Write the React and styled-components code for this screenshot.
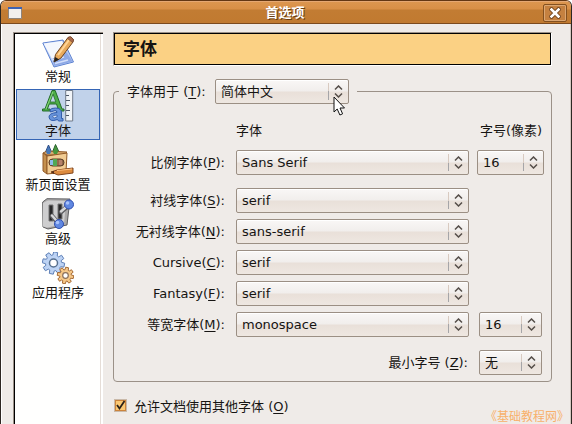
import React from "react";
import styled, { createGlobalStyle } from "styled-components";

const GlobalStyle = createGlobalStyle`
  * { box-sizing: border-box; }
  body {
    margin: 0;
    overflow: hidden;
    font-family: "DejaVu Sans", "Noto Sans CJK SC", sans-serif;
    font-size: 13px;
    color: #161412;
  }
`;

const Window = styled.div`
  width: 572px;
  height: 424px;
  display: flex;
  flex-direction: column;
  overflow: hidden;
  background: #efebe8;
  border: solid #2d2722;
  border-width: 1px 1px 0;
  border-color: #633713 #2d2722 #2d2722;
  border-radius: 6px 6px 0 0;
  box-shadow: inset 1px 0 #fff, inset -1px 0 #d4c8c0;
`;

const TitleBar = styled.header`
  flex: none;
  height: 23px;
  display: grid;
  grid-template-columns: 31px 1fr 33px;
  align-items: center;
  border-top: 1px solid #e5a873;
  border-bottom: 1px solid #7c4a1d;
  background: linear-gradient(#dc964f 0, #d88f46 7px, #c27c33 8px, #c17a30 100%);
`;

const WindowGlyph = styled.svg`
  display: block;
  margin: 1px 0 0 7px;
`;

const Title = styled.h1`
  margin: 0;
  text-align: center;
  font-size: 13px;
  line-height: 20px;
  font-weight: bold;
  color: #fff;
  text-shadow: 1px 1px #6a3d12;
`;

const CloseButton = styled.button`
  width: 24px;
  height: 18px;
  margin: 1px 0 0 5px;
  padding: 0;
  display: flex;
  align-items: center;
  justify-content: center;
  border: 1px solid #83501f;
  border-radius: 2px;
  background: #c58140;
  box-shadow: inset 0 0 0 1px #dba672;
`;

const Body = styled.div`
  flex: 1;
  display: flex;
  padding: 8px 19px 0 12px;
`;

const Sidebar = styled.nav`
  flex: none;
  width: 89px;
  height: 400px;
  margin: 1px 0 0 1px;
  padding: 1px;
  display: flex;
  flex-direction: column;
  gap: 3px;
  background: #fffffe;
  border: solid #000;
  border-width: 1px 0 0 1px;
  box-shadow: inset -2px 0 #fff, inset -3px 0 #e5ddd7;
  outline: 1px solid #9b9188;
  clip-path: inset(-1px 0 0 -1px);
`;

const Category = styled.div`
  width: 84px;
  height: 51px;
  display: flex;
  flex-direction: column;
  align-items: center;
  border: 1px solid ${(p) => (p.$selected ? "#3565b5" : "transparent")};
  background: ${(p) => (p.$selected ? "#c1d2ea" : "transparent")};
  line-height: 17px;

  svg { display: block; flex: none; }
`;

const Content = styled.main`
  width: 439px;
  margin-left: 10px;
`;

const Heading = styled.h2`
  margin: 0;
  height: 34px;
  border: 1px solid;
  border-color: #9b9188 #fff #fff #9b9188;
  box-shadow: inset 0 0 0 1px #000;
  background: #fbd184;
  padding-left: 9px;
  line-height: 33px;
  font-size: 17px;
  font-weight: bold;
`;

const Group = styled.section`
  width: 439px;
  height: 291px;
  margin-top: 25px;
  border: 1px solid #9b9188;
  border-radius: 4px;
`;

const Legend = styled.div`
  width: 238px;
  height: 25px;
  margin: -13px 0 0 5px;
  padding: 0 8px;
  display: flex;
  align-items: center;
  justify-content: space-between;
  background: #efebe8;
`;

const Row = styled.div`
  display: grid;
  grid-template-columns: 111px 233px 1fr;
  column-gap: 11px;
  align-items: center;
  height: 25px;
  margin-top: ${(p) => p.$gap}px;
`;

const Label = styled.label`
  text-align: right;
  white-space: nowrap;
  line-height: 18px;
  u { text-underline-offset: 2px; text-decoration-thickness: 1px; }
`;

const ColumnTitle = styled.span`
  white-space: nowrap;
  line-height: 18px;
  margin-left: ${(p) => p.$indent || 0}px;
`;

const ComboBox = styled.div`
  width: ${(p) => p.$width}px;
  height: 25px;
  margin-left: ${(p) => p.$indent || 0}px;
  display: flex;
  align-items: center;
  border: 1px solid #9b8f84;
  border-radius: 2px;
  padding-left: 5px;
  line-height: 18px;
  background: linear-gradient(#f9f7f6 0, #f1eeec 11px, #e9e0d9 12px, #eee7e1 100%);
  box-shadow: inset 0 1px #fff;
`;

const ComboValue = styled.span`
  flex: 1;
  white-space: nowrap;
`;

const Divider = styled.span`
  width: 1px;
  height: 17px;
  background: linear-gradient(#d8cac0 50%, #a5a5a8 50%);
`;

const Arrows = styled.svg`
  display: block;
  width: 19px;
  height: 13px;
`;

const MinimumRow = styled.div`
  display: flex;
  justify-content: flex-end;
  align-items: center;
  gap: 11px;
  height: 25px;
  margin: 13px 9px 0 0;
`;

const CheckRow = styled.div`
  display: flex;
  align-items: center;
  gap: 7px;
  height: 20px;
  margin: 15px 0 0 1px;
`;

const CheckBox = styled.span`
  width: 13px;
  height: 13px;
  display: flex;
  margin-bottom: 3px;
  background: #fbc873;
  border: 1px solid #c9b9a9;
  box-shadow: inset 0 0 0 1px #cc843c;
`;

const Signature = styled.div`
  position: absolute;
  left: 485px;
  top: 407px;
  white-space: nowrap;
  font: 12px/18px "Noto Sans CJK SC", sans-serif;
  color: #f8b06a;
`;

const Pointer = styled.svg`
  position: absolute;
  left: 333px;
  top: 96px;
`;

function Combo({ value, width, indent }) {
  return (
    <ComboBox $width={width} $indent={indent}>
      <ComboValue>{value}</ComboValue>
      <Divider />
      <Arrows viewBox="0 0 19 13">
        <path d="M6 4.5 9.5 1 13 4.5M6 8.5 9.5 12 13 8.5" fill="none" stroke="#554e49" strokeWidth="1.5" />
      </Arrows>
    </ComboBox>
  );
}

function NoteIcon() {
  return (
    <svg width="32" height="32" viewBox="0 0 32 32">
      <path d="M.8 7 21 4 31.5 26 12 31Z" fill="#b4caf4" stroke="#5f83d0" />
      <path d="M1.6 7.5 20 5 25 16 10 23Z" fill="#f4f7fd" />
      <path d="M10 23 24 15.5 30.6 25.5 12.5 30Z" fill="#8ea9e6" />
      <path d="M10 24 22 21M13 27.5 26 24" stroke="#d4e0fa" strokeWidth="1.5" />
      <path d="M12 26 13.5 18.5 26 1.5Q29-.5 31.5 3.5L31 6 19 22Z" fill="#e9aa5c" stroke="#6e4521" />
      <path d="M16 19 27 4" stroke="#ffd597" strokeWidth="2" />
      <path d="m25.5 2.5 5 4 1-2.5Q29-1 26 1.5Z" fill="#a96a4c" stroke="#71422b" strokeWidth=".6" />
      <path d="m12 26 1.2-5 4 2.4Z" fill="#222" />
    </svg>
  );
}

function FontIcon() {
  return (
    <svg width="32" height="32" viewBox="0 0 32 32">
      <path d="M23.7.5h7v30.5h-7z" fill="#f1f4f8" stroke="#6f7988" />
      <path d="M24 5.5h3M24 10.5h4M24 15.5h3M24 20.5h4M24 25.5h3" stroke="#4d5868" />
      <path d="M.5 21v-2H3L10 .5h3.2L20 19h2v2h-8v-2h2.2l-1.7-5H7.2l-1.8 5h2.8v2Z" fill="#4fae48" stroke="#246c2a" />
      <path d="m8 12 3-8 2.8 8Z" fill="#c1d2ea" stroke="#246c2a" strokeWidth=".8" />
      <path d="M4 19 10.8 2" stroke="#87d77b" />
      <path d="M8 20q1-2 5.5-2 6 0 6 5v5.5h1.5V31h-4.5l-1-1.5q-8 3-8.5-2.5 0-4 8-4.5 0-2-2-2L8.5 22Z" fill="#6794db" stroke="#315caa" />
      <path d="M15 25q-4.5 0-4.5 2 1 2 4.5 0Z" fill="#d4e0f3" stroke="#315caa" strokeWidth=".8" />
    </svg>
  );
}

function CrayonsIcon() {
  return (
    <svg width="32" height="32" viewBox="0 0 32 32">
      <path d="m3.5 8 3-7 3 7v4h-6Z" fill="#4b78cf" stroke="#29487f" />
      <path d="m10.5 8 3-7.5L17 8v4h-6.5Z" fill="#4c9c48" stroke="#275e2a" />
      <path d="m1 9 4-2 20 1-3 3H5Z" fill="#d7ab6f" stroke="#915926" />
      <path d="m1 9 4 3v18l-4-3Z" fill="#c4904e" stroke="#915926" />
      <path d="m5 12 20-3-1 19-19 2Z" fill="#f1cc93" stroke="#915926" />
      <path d="m4 8 2.5-6L9 8l-1 2H5Z" fill="#4778b6" />
      <path d="m11 8 2.5-6L16 8l-1 2h-3Z" fill="#47963e" />
      <rect x="7" y="15" width="15" height="7" rx="3.5" fill="#93694b" stroke="#583c27" />
      <path d="M8 16h3v5H8Z" fill="#8dbbe9" />
      <path d="M11 15h4v7h-4Z" fill="#50a853" />
      <path d="M17 16h3v5h-3Z" fill="#b5816a" />
      <path d="m9 28 6-2 16-2v5l-15 2Z" fill="#dc8b3f" stroke="#81461e" />
      <path d="m15 26.5 15-1.5" stroke="#ffc282" />
      <path d="m9 28 3-1v3Z" fill="#532d18" />
    </svg>
  );
}

function SwitchIcon() {
  return (
    <svg width="32" height="32" viewBox="0 0 32 32">
      <path d="M.7 4 5 .7 28 1l-3 26-19 4-5-2Z" fill="#aaa9a9" stroke="#5e5e60" />
      <path d="m1 5 5-2.5 18 .5-2 23L5 29.5l-4-1Z" fill="#cececf" />
      <path d="M7 7h4v16H7ZM16 6h4v15h-4Z" fill="#29292a" stroke="#777" />
      <path d="m10 18 7 8M19 14l8-7" stroke="#5e5e61" strokeWidth="4.5" strokeLinecap="round" />
      <path d="m10 17.5 7 8M19 13.5l8-7" stroke="#d7d8d9" strokeWidth="2.4" strokeLinecap="round" />
      <circle cx="27" cy="6.5" r="4.5" fill="#6088e1" stroke="#304faf" />
      <circle cx="17" cy="26" r="4.5" fill="#6088e1" stroke="#304faf" />
      <circle cx="25.5" cy="5" r="1.8" fill="#a8c2fc" />
      <circle cx="15.5" cy="24.5" r="1.8" fill="#a8c2fc" />
    </svg>
  );
}

function gearPath(cx, cy, outer, inner) {
  const points = [];
  for (let i = 0; i < 8; i += 1) {
    const center = (i * Math.PI) / 4 + 0.2;
    for (const [offset, radius] of [[-0.29, inner], [-0.18, outer], [0.18, outer], [0.29, inner]]) {
      points.push(`${cx + Math.cos(center + offset) * radius} ${cy + Math.sin(center + offset) * radius}`);
    }
  }
  return `M${points.join("L")}Z`;
}

function GearsIcon() {
  return (
    <svg width="32" height="32" viewBox="0 0 32 32">
      <path d={gearPath(11.5, 11, 11.2, 8)} fill="#bdd3f4" stroke="#5e80b7" />
      <circle cx="11.5" cy="11" r="4" fill="#fff" stroke="#587190" strokeWidth="1.5" />
      <path d={gearPath(23.5, 23.5, 8.3, 5.8)} fill="#f6c888" stroke="#a76b35" />
      <circle cx="23.5" cy="23.5" r="2.8" fill="#fff" stroke="#8b705b" strokeWidth="1.2" />
    </svg>
  );
}

const categories = [
  ["常规", NoteIcon],
  ["字体", FontIcon],
  ["新页面设置", CrayonsIcon],
  ["高级", SwitchIcon],
  ["应用程序", GearsIcon],
];

const fonts = [
  ["比例字体", "P", "Sans Serif", 7, 67, -2],
  ["衬线字体", "S", "serif", 13],
  ["无衬线字体", "N", "sans-serif", 6],
  ["Cursive", "C", "serif", 6],
  ["Fantasy", "F", "serif", 6],
  ["等宽字体", "M", "monospace", 6, 63, 0],
];

export default function App() {
  return (
    <>
      <GlobalStyle />
      <Window>
        <TitleBar>
          <WindowGlyph width="14" height="12" viewBox="0 0 14 12">
            <path d="M.5.5h13v11H.5z" fill="#f2efed" stroke="#8f847b" />
            <path d="M0 1h14" stroke="#3e62b2" strokeWidth="2" />
          </WindowGlyph>
          <Title>首选项</Title>
          <CloseButton aria-label="关闭">
            <svg width="12" height="12" viewBox="0 0 12 12">
              <path d="m2.5 2.5 7 7m0-7-7 7" stroke="#70421b" strokeWidth="4.4" strokeLinecap="square" />
              <path d="m2.5 2.5 7 7m0-7-7 7" stroke="#fff" strokeWidth="2.6" strokeLinecap="square" />
            </svg>
          </CloseButton>
        </TitleBar>
        <Body>
          <Sidebar>
            {categories.map(([name, Icon]) => (
              <Category key={name} $selected={name === "字体"}>
                <Icon />
                {name}
              </Category>
            ))}
          </Sidebar>
          <Content>
            <Heading>字体</Heading>
            <Group>
              <Legend>
                <Label>字体用于 (<u>T</u>):</Label>
                <Combo value="简体中文" width={134} />
              </Legend>
              <Row $gap={14}>
                <span />
                <ColumnTitle>字体</ColumnTitle>
                <ColumnTitle>字号(像素)</ColumnTitle>
              </Row>
              {fonts.map(([name, key, value, gap, sizeWidth, indent]) => (
                <Row key={name} $gap={gap}>
                  <Label>{name}(<u>{key}</u>):</Label>
                  <Combo value={value} width={233} />
                  {sizeWidth && <Combo value="16" width={sizeWidth} indent={indent - 1} />}
                </Row>
              ))}
              <MinimumRow>
                <Label>最小字号 (<u>Z</u>):</Label>
                <Combo value="无" width={63} />
              </MinimumRow>
            </Group>
            <CheckRow>
              <CheckBox>
                <svg width="11" height="11" viewBox="0 0 11 11">
                  <path d="m2 5 2.5 3.5L9.5 1" fill="none" stroke="#2b2119" strokeWidth="1.8" />
                </svg>
              </CheckBox>
              <Label>允许文档使用其他字体 (<u>O</u>)</Label>
            </CheckRow>
          </Content>
        </Body>
      </Window>
      <Pointer width="13" height="20" viewBox="0 0 13 20">
        <path d="M1 1v15l3.2-3 2.7 6 2.7-1.2L7 12h4.5Z" fill="#fff" stroke="#111" />
      </Pointer>
      <Signature>《基础教程网》</Signature>
    </>
  );
}
